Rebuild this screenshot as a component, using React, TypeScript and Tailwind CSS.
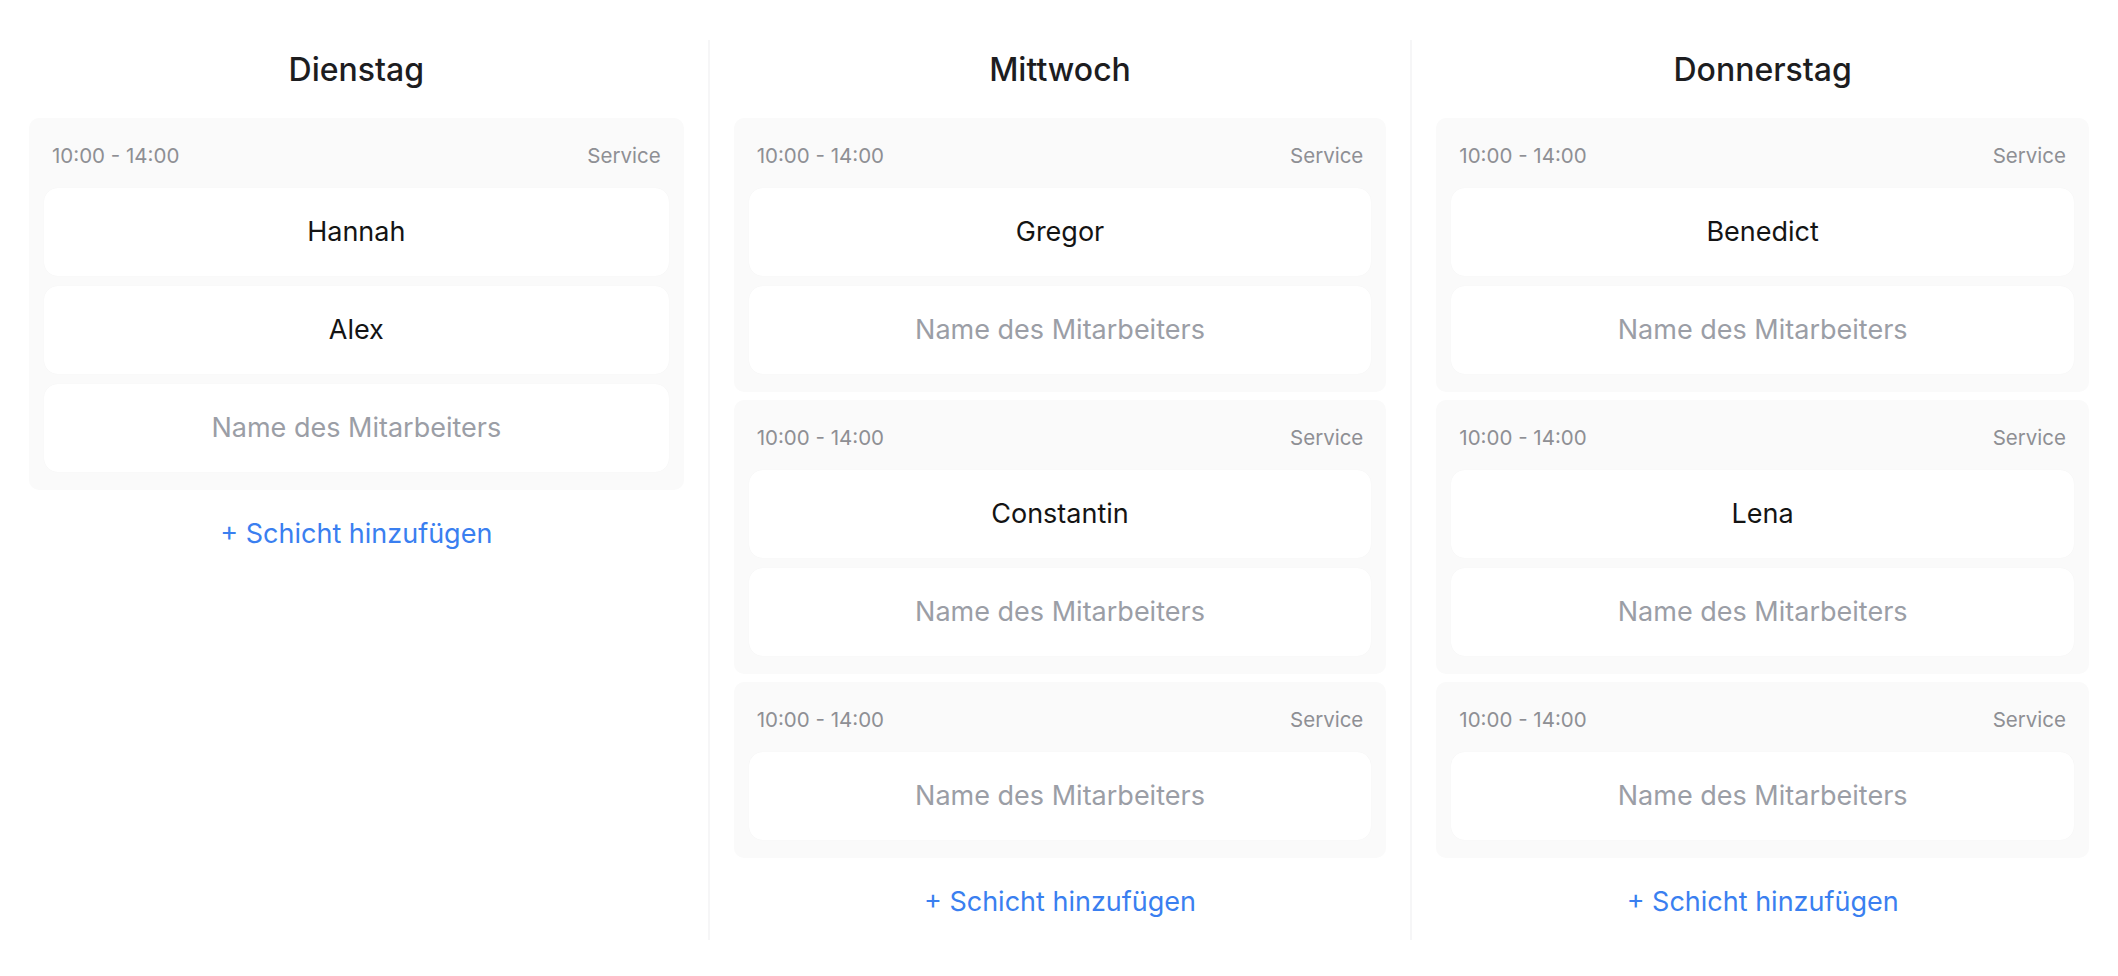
import React from 'react';

type Shift = {
  time: string;
  role: string;
  slots: (string | null)[];
};

type Day = {
  name: string;
  shifts: Shift[];
};

const days: Day[] = [
  {
    name: 'Dienstag',
    shifts: [{ time: '10:00 - 14:00', role: 'Service', slots: ['Hannah', 'Alex', null] }],
  },
  {
    name: 'Mittwoch',
    shifts: [
      { time: '10:00 - 14:00', role: 'Service', slots: ['Gregor', null] },
      { time: '10:00 - 14:00', role: 'Service', slots: ['Constantin', null] },
      { time: '10:00 - 14:00', role: 'Service', slots: [null] },
    ],
  },
  {
    name: 'Donnerstag',
    shifts: [
      { time: '10:00 - 14:00', role: 'Service', slots: ['Benedict', null] },
      { time: '10:00 - 14:00', role: 'Service', slots: ['Lena', null] },
      { time: '10:00 - 14:00', role: 'Service', slots: [null] },
    ],
  },
];

function Slot({ name }: { name: string | null }) {
  return (
    <div className="h-[88px] flex items-center justify-center bg-white rounded-[14px] shadow-[0_0_1px_rgba(0,0,0,0.05)]">
      {name ? (
        <span className="text-[27px] text-[#141414]">{name}</span>
      ) : (
        <span className="text-[27px] text-[#9b9ea6]">Name des Mitarbeiters</span>
      )}
    </div>
  );
}

function ShiftCard({ shift }: { shift: Shift }) {
  return (
    <div className="bg-[#fafafa] rounded-[10px] px-[15px] pt-[8px] pb-[18px]">
      <div className="flex justify-between items-center px-[8px] pt-[16px] pb-[18px] leading-[28px] text-[20.5px] text-[#8e8f94]">
        <span>{shift.time}</span>
        <span>{shift.role}</span>
      </div>
      <div className="flex flex-col gap-[10px]">
        {shift.slots.map((s, i) => (
          <Slot key={i} name={s} />
        ))}
      </div>
    </div>
  );
}

function DayColumn({ day, first }: { day: Day; first: boolean }) {
  return (
    <div className={`px-[24px] pt-[12px] pb-[20px] ${first ? '' : 'border-l-2 border-[#f6f6f7]'}`}>
      <h2 className="text-center text-[32px] leading-[36px] font-medium text-[#1d1d1f] mb-[30px]">
        {day.name}
      </h2>
      <div className="flex flex-col gap-[8px]">
        {day.shifts.map((shift, i) => (
          <ShiftCard key={i} shift={shift} />
        ))}
      </div>
      <div className="mt-[26px] text-center">
        <button className="text-[27px] leading-[36px] text-[#3a7ff0]">+ Schicht hinzufügen</button>
      </div>
    </div>
  );
}

export default function App() {
  return (
    <main
      className="min-h-screen bg-white px-[5px] pt-[40px]"
      style={{ fontFamily: 'Inter, "Noto Sans", sans-serif' }}
    >
      <div className="grid grid-cols-3 items-stretch">
        {days.map((day, i) => (
          <DayColumn key={day.name} day={day} first={i === 0} />
        ))}
      </div>
    </main>
  );
}
